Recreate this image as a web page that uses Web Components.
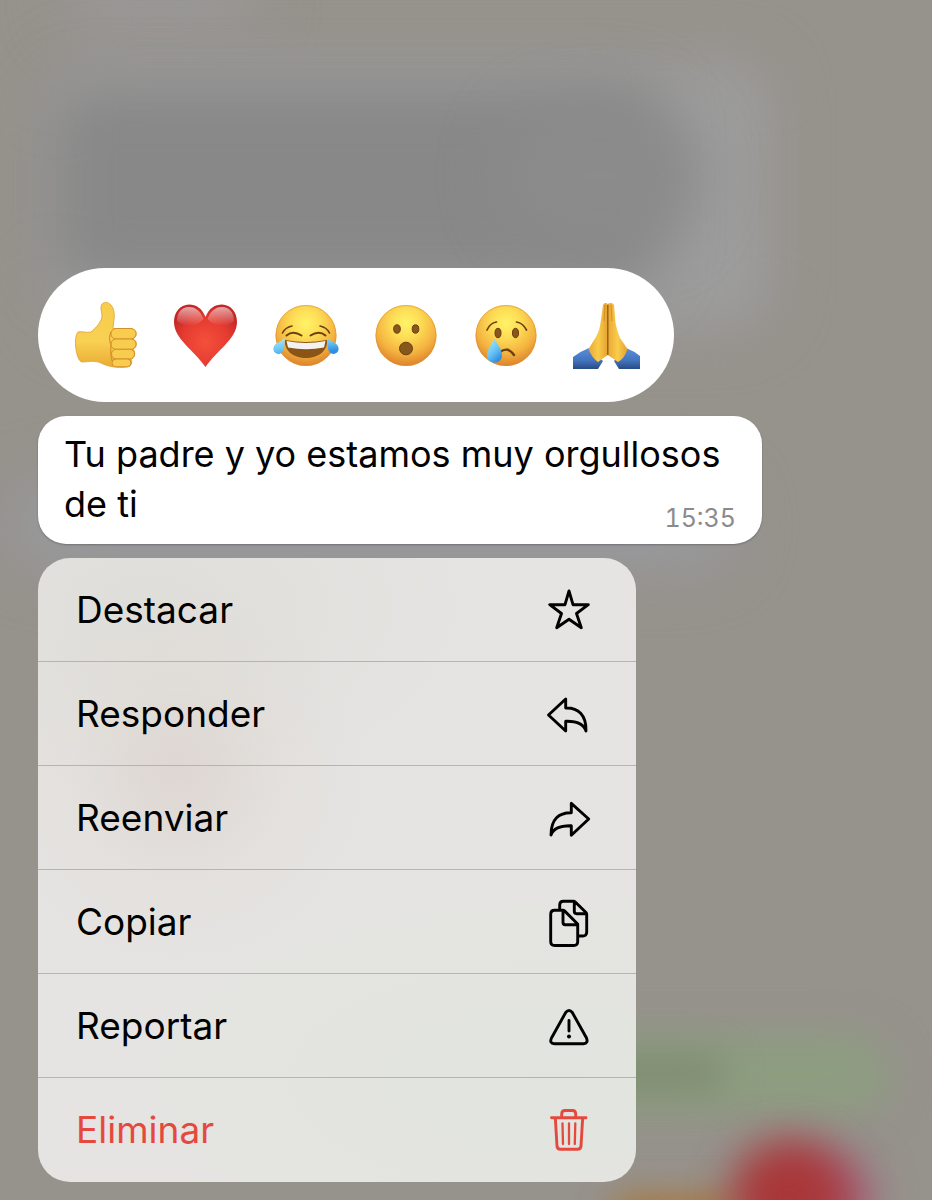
<!DOCTYPE html>
<html lang="es">
<head>
<meta charset="utf-8">
<meta name="viewport" content="width=device-width, initial-scale=1">
<title>Menú del mensaje</title>
<style>
  body { margin: 0; font-family: Inter, "Noto Sans", sans-serif; color: #000; background: #96928c; }
</style>
</head>
<body>
<message-overlay>
  <chat-backdrop slot="backdrop"></chat-backdrop>
  <reaction-bar></reaction-bar>
  <message-bubble time="15:35"><span>Tu padre y yo estamos muy orgullosos</span> <span>de ti</span></message-bubble>
  <context-menu>
    <menu-action icon="star">Destacar</menu-action>
    <menu-action icon="reply">Responder</menu-action>
    <menu-action icon="forward">Reenviar</menu-action>
    <menu-action icon="copy">Copiar</menu-action>
    <menu-action icon="report">Reportar</menu-action>
    <menu-action icon="trash" danger>Eliminar</menu-action>
  </context-menu>
</message-overlay>

<script>
const define = (name, html, setup) => customElements.define(name, class extends HTMLElement {
  constructor() {
    super();
    this.attachShadow({ mode: 'open' }).innerHTML = html;
  }
  connectedCallback() { if (setup) setup(this, this.shadowRoot); }
});

define('message-overlay', `
  <style>
    :host { display: block; position: relative; min-height: 100vh; box-sizing: border-box; padding: 268px 38px 18px; overflow: hidden; }
    main { position: relative; display: flex; flex-direction: column; align-items: flex-start; gap: 14px; }
  </style>
  <slot name="backdrop"></slot>
  <main><slot></slot></main>`);

/* Blurred conversation behind the menu */
define('chat-backdrop', `
  <style>
    :host { position: absolute; inset: 0; overflow: hidden; background: #96928c; }
    i { position: absolute; border-radius: 40px; filter: blur(28px); }
    .top { left: 60px; top: -30px; width: 200px; height: 60px; background: #9a9998; }
    .bubble { left: 50px; top: 60px; width: 720px; height: 270px; background: #9d9d9d; }
    .text { left: 50px; top: 84px; width: 610px; height: 204px; background: #888; }
    .text2 { left: 500px; top: 105px; width: 200px; height: 140px; background: #8b8b8b; border-radius: 70px; }
    .mid { left: 10px; top: 480px; width: 725px; height: 90px; background: #98999d; }
    .mine { left: 500px; top: 1036px; width: 390px; height: 76px; background: #8d9e80; filter: blur(20px); }
    .mine2 { left: 560px; top: 1056px; width: 165px; height: 34px; background: #7d8a70; filter: blur(18px); }
    .violet { left: 780px; top: 1155px; width: 90px; height: 90px; background: #a4607c; filter: blur(22px); }
    .red { left: 730px; top: 1140px; width: 118px; height: 116px; background: #a93739; border-radius: 50%; filter: blur(20px); }
    .orange { left: 610px; top: 1196px; width: 130px; height: 50px; background: #a8763a; filter: blur(17px); }
  </style>
  <i class="top"></i><i class="bubble"></i><i class="text"></i><i class="text2"></i><i class="mid"></i>
  <i class="mine"></i><i class="mine2"></i><i class="violet"></i><i class="orange"></i><i class="red"></i>`);

const FACE = `<circle cx="34" cy="34.500" r="30.500" fill="url(#face)"/><circle cx="34" cy="34.500" r="30" fill="none" stroke="#dd9431" stroke-opacity=".6"/>`;
const FACE_DEFS = `<defs>
  <radialGradient id="face" cx=".5" cy=".3" r=".7"><stop offset="0" stop-color="#fff368"/><stop offset=".35" stop-color="#fddc55"/><stop offset=".7" stop-color="#f4b440"/><stop offset="1" stop-color="#dd812b"/></radialGradient>
  <linearGradient id="tear" x1="0" y1="0" x2=".6" y2="1"><stop offset="0" stop-color="#b4eafb"/><stop offset=".6" stop-color="#66c3f4"/><stop offset="1" stop-color="#2f8fe0"/></linearGradient></defs>`;
const EMOJI = [
  ['Me gusta', `<defs><linearGradient id="skin" x1="0" y1="0" x2="0" y2="1"><stop offset="0" stop-color="#f6cd4c"/><stop offset=".6" stop-color="#f8d053"/><stop offset="1" stop-color="#e9ab32"/></linearGradient></defs>
    <path d="M19 31C24 27 30 20 30 15C30 11 28 8 29.500 4C31 .5 36 .5 39 4C42.500 8 43 15 41.500 22L41 27.500L60 28C66 29 65 36 61 38C66 40 65 47 61 48C64 51 63 57 59 58C61 62 59 66 54 66C46 67 36 66 29 62C22 59 17 61 10 61C4 60 1 36 6 31C9 30 15 32 19 31Z" fill="url(#skin)" stroke="#dfa02e" stroke-width=".8"/>
    <g fill="#f7cc4f" stroke="#d3902a" stroke-width="1"><rect x="39" y="27.500" width="25" height="10.500" rx="5"/><rect x="39" y="38" width="25" height="10.300" rx="5"/><rect x="39.500" y="48.300" width="23" height="9.700" rx="4.800"/><rect x="40" y="58" width="19" height="7.800" rx="3.900"/></g>
    <path d="M39 31Q36 37 39 44Q38 51 40 60" fill="none" stroke="#d99428" stroke-width="1.200"/>`],
  ['Me encanta', `<defs><radialGradient id="heart" cx=".5" cy=".6" r=".6"><stop offset="0" stop-color="#f4503c"/><stop offset=".6" stop-color="#e63c31"/><stop offset="1" stop-color="#c32827"/></radialGradient><linearGradient id="shine" x1="0" y1="0" x2="0" y2="1"><stop offset="0" stop-color="#fff" stop-opacity=".6"/><stop offset="1" stop-color="#fff" stop-opacity="0"/></linearGradient></defs>
    <path d="M33.500 16C30 7 24 3.500 17 3.500C8 4 2 11 2 21C2 38 22 49 33.500 66C45 49 65 38 65 21C65 11 59 4 50 3.500C43 3.500 37 7 33.500 16Z" fill="url(#heart)"/>
    <path d="M31.500 18C28 9 23 6 17 6C10 6 5 11 5 20C14 27 24 26 31.500 18ZM35.500 18C39 9 44 6 50 6C57 6 62 11 62 20C54 27 43 26 35.500 18Z" fill="url(#shine)"/>`],
  ['Me divierte', `${FACE_DEFS}${FACE}
    <path d="M13 39Q34 43 55 39C56 50 46 57 34 57S12 50 13 39Z" fill="#8a5416"/>
    <path d="M14.500 40Q34 44 53.500 40L52 46.500Q34 50 16 46.500Z" fill="#f3f2f0"/>
    <g fill="none" stroke="#6d3f10" stroke-linecap="round"><path d="M10.500 32Q13 26.500 20 25M57.500 32Q55 26.500 48 25" stroke-width="1.600"/><path d="M14.500 34.500Q21 29 29.500 34.500M38.500 34.500Q47 29 53.500 34.500" stroke-width="2"/></g>
    <path d="M12.500 37C13 46 12 53 6 53C0 52 0 45 5 42Q10 40 12.500 37ZM55.500 37C55 46 56 53 62 53C68 52 68 45 63 42Q58 40 55.500 37Z" fill="url(#tear)"/>`],
  ['Me asombra', `${FACE_DEFS}${FACE}<g fill="#88571c" stroke="#6b3e10"><ellipse cx="25" cy="28" rx="3.300" ry="4.200"/><ellipse cx="43.500" cy="28" rx="3.300" ry="4.200"/><ellipse cx="34" cy="47.500" rx="6.500" ry="6.300"/></g>`],
  ['Me entristece', `${FACE_DEFS}${FACE}<g fill="#88571c" stroke="#6b3e10"><ellipse cx="26" cy="32" rx="3" ry="4.700"/><ellipse cx="43.500" cy="32" rx="3" ry="4.700"/></g>
    <g fill="none" stroke="#6d3f10" stroke-linecap="round" stroke-width="1.700"><path d="M15 29Q18 22 24.500 21M44.500 21Q51 22 54.500 29"/><path d="M28 51Q36 45 42 54" stroke-width="2.400"/></g>
    <path d="M22.500 38Q30 49 30 54C30 59 27 61.500 22.500 61.500S15 59 15 54Q15 49 22.500 38Z" fill="url(#tear)"/>`],
  ['Gracias', `<defs><linearGradient id="palm" x1="0" y1="0" x2="1" y2="0"><stop offset="0" stop-color="#e9a830"/><stop offset=".5" stop-color="#f9cc4c"/><stop offset="1" stop-color="#e5a02e"/></linearGradient><linearGradient id="sleeve" x1="0" y1="0" x2="0" y2="1"><stop offset="0" stop-color="#5b8edb"/><stop offset=".6" stop-color="#4273bd"/><stop offset="1" stop-color="#294a84"/></linearGradient></defs>
    <path d="M1 56Q9 50 17 47L31 60L26 68H1ZM68 55Q62 50 54 47L42 60L47 68H68Z" fill="url(#sleeve)"/>
    <path d="M35.800 3C34 1 31.500 2 31 4L28.500 22Q28 29 24 36L16.500 48Q20 57 26 61L35.800 54Z" fill="url(#palm)"/>
    <path d="M35.800 3C38 1 41.500 2 42 4L43.500 22Q45 30 48 37L55.500 48Q53 57 46 61L35.800 54Z" fill="url(#palm)"/>
    <path d="M35.800 4V54" fill="none" stroke="#8f5518" stroke-width="1.300"/><path d="M33 4L32 20M39 4L40 20" fill="none" stroke="#c78728" stroke-width=".8"/>`]
];

define('reaction-bar', `
  <style>
    :host { display: block; max-width: 100%; box-sizing: border-box; padding: 33px 34px; background: #fff; border-radius: 67px; }
    div { display: flex; flex-wrap: wrap; gap: 32px; }
    button { display: block; width: 68px; height: 68px; padding: 0; border: 0; background: none; }
    svg { display: block; overflow: visible; }
  </style>
  <div role="group" aria-label="Reacciones">${EMOJI.map(([label, art]) =>
    `<button type="button" aria-label="${label}"><svg width="68" height="68" viewBox="0 0 68 68" aria-hidden="true">${art}</svg></button>`).join('')}</div>`);

define('message-bubble', `
  <style>
    :host { display: block; width: 724px; max-width: 100%; box-sizing: border-box; padding: 13px 26px 15px; background: #fff; border-radius: 28px; box-shadow: 0 1px 2px rgb(0 0 0 / .25); }
    p { display: flow-root; margin: 0; font-size: 36px; line-height: 50px; }
    time { float: right; margin-top: 28px; font-size: 25px; line-height: 22px; font-variant-numeric: tabular-nums; color: #8b8b8d; }
  </style>
  <p><slot></slot><time></time></p>`,
  (el, root) => { root.querySelector('time').textContent = el.getAttribute('time'); });

define('context-menu', `
  <style>
    :host { display: block; width: 598px; max-width: 100%; border-radius: 32px; overflow: hidden;
      background:
        radial-gradient(ellipse 190px 190px at 140px 215px, rgb(220 210 205 / .75), rgb(224 217 212 / .35) 55%, transparent),
        radial-gradient(ellipse 320px 190px at 110px 50px, rgb(221 220 215 / .8), transparent),
        radial-gradient(ellipse 420px 180px at 520px 520px, rgb(225 228 222 / .9), transparent),
        #e5e4e2; }
  </style>
  <div role="menu"><slot></slot></div>`);

const ICONS = {
  star: '<path d="M24 5L28 18.700H43.300L31.500 27.500L36.300 41.700L24 33.300L11.700 41.700L16.500 27.500L4.700 18.700H20Z"/>',
  reply: '<path d="M3.500 25L20.700 9V18C33 17.500 41.500 25 41 41C38.500 33 31 31 20.700 31.300V41Z"/>',
  forward: '<path d="M43.700 25L26.300 9.300V18.700C14 18.500 6 25 6 41C8.500 33.500 16 31.500 26.300 31.700V41.300Z"/>',
  copy: '<path d="M18 12.300H9.700Q5.700 12.300 5.700 16.300V43.500Q5.700 47.500 9.700 47.500H28.700Q32.700 47.500 32.700 43.500V26L19.500 12.900Q18.800 12.300 18 12.300V24.500Q18 26.700 20.200 26.700H32.700M14.700 12V7Q14.700 3.300 18.500 3.300H28.500Q29.500 3.300 30.300 4L41 14.500Q41.700 15.200 41.700 16.300V34Q41.700 38 37.700 38H33.500M29.300 3.500V13.300Q29.300 15.700 31.700 15.700H41.500"/>',
  report: '<path d="M20.700 10.500Q24 6.500 27.300 10.500L41.500 36Q43.500 41.500 38.500 41.700H9.500Q4 41.500 6.500 36ZM24 18.500V29"/><circle cx="24" cy="34.500" r="2" fill="currentColor" stroke="none"/>',
  trash: '<path d="M6.500 11.700H41M16.700 11.700V8Q16.700 4.500 20 4.500H27.500Q30.700 4.500 30.700 8V11.700M10.300 11.700L12 40Q12.300 43.300 15.500 43.300H32.500Q35.700 43.300 36 40L37.700 11.700"/><path d="M17.500 17.500L18 38M24 17.500V38M30.300 17.500L29.800 38" stroke-width="2.300"/>'
};

define('menu-action', `
  <style>
    :host { display: block; border-bottom: 1px solid #b5b4b2; }
    :host(:last-of-type) { border-color: transparent; }
    button { display: flex; align-items: center; justify-content: space-between; width: 100%; min-height: 103px; padding: 0 43px 0 38px; border: 0; background: none; color: inherit; font: inherit; font-size: 37px; line-height: 50px; text-align: left; }
    :host([danger]) { color: #e5493e; }
    svg { flex: none; overflow: visible; fill: none; stroke: currentColor; stroke-width: 2.900; stroke-linecap: round; stroke-linejoin: round; }
  </style>
  <button type="button" role="menuitem"><span><slot></slot></span><svg width="48" height="48" viewBox="0 0 48 48" aria-hidden="true"></svg></button>`,
  (el, root) => { root.querySelector('svg').innerHTML = ICONS[el.getAttribute('icon')]; });
</script>
</body>
</html>
